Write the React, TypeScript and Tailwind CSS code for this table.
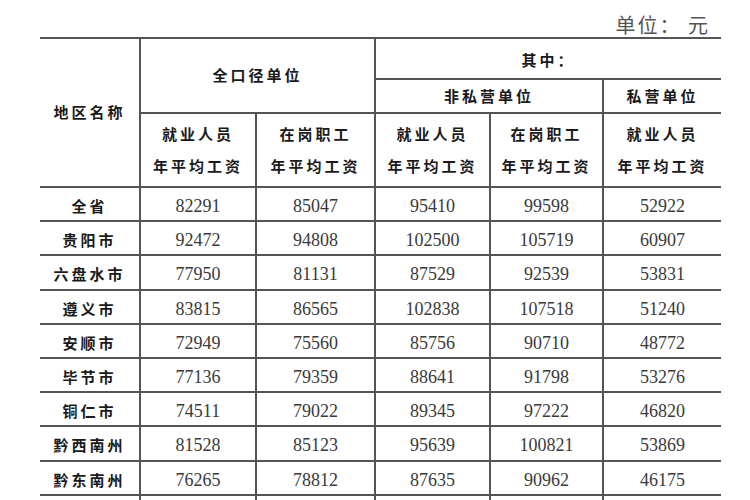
import React from "react";

const rows: [string, number, number, number, number, number][] = [
  ["全省", 82291, 85047, 95410, 99598, 52922],
  ["贵阳市", 92472, 94808, 102500, 105719, 60907],
  ["六盘水市", 77950, 81131, 87529, 92539, 53831],
  ["遵义市", 83815, 86565, 102838, 107518, 51240],
  ["安顺市", 72949, 75560, 85756, 90710, 48772],
  ["毕节市", 77136, 79359, 88641, 91798, 53276],
  ["铜仁市", 74511, 79022, 89345, 97222, 46820],
  ["黔西南州", 81528, 85123, 95639, 100821, 53869],
  ["黔东南州", 76265, 78812, 87635, 90962, 46175],
];

const cjk = "font-['Noto_Sans_CJK_SC',sans-serif]";
const cell = "border-2 border-[#555] p-0 text-center align-middle";
const head = `${cell} ${cjk} text-[15px] font-bold tracking-[3px] text-[#1a1a1a]`;

function TwoLine({ a }: { a: string }) {
  return (
    <div className="flex flex-col items-center leading-[32px]">
      <span>{a}</span>
      <span>年平均工资</span>
    </div>
  );
}

export default function App() {
  return (
    <div className="w-[750px] h-[500px] overflow-hidden bg-white">
      <div
        className={`h-[37px] flex items-end justify-end pr-[40px] leading-[24px] ${cjk} text-[20px] tracking-[2px] text-[#555]`}
      >
        单位： 元
      </div>
      <table className="ml-[40px] w-[681px] table-fixed border-collapse">
        <colgroup>
          <col className="w-[100px]" />
          <col className="w-[116px]" />
          <col className="w-[119px]" />
          <col className="w-[115px]" />
          <col className="w-[113px]" />
          <col className="w-[118px]" />
        </colgroup>
        <tbody>
          <tr className="h-[41px]">
            <td rowSpan={3} className={`${head} border-l-0`}>
              地区名称
            </td>
            <td rowSpan={2} colSpan={2} className={head}>
              全口径单位
            </td>
            <td colSpan={3} className={`${head} border-r-0 pt-[4px]`}>
              其中：
            </td>
          </tr>
          <tr className="h-[34px]">
            <td colSpan={2} className={head}>
              非私营单位
            </td>
            <td className={`${head} border-r-0`}>私营单位</td>
          </tr>
          <tr className="h-[74px]">
            <td className={head}>
              <TwoLine a="就业人员" />
            </td>
            <td className={head}>
              <TwoLine a="在岗职工" />
            </td>
            <td className={head}>
              <TwoLine a="就业人员" />
            </td>
            <td className={head}>
              <TwoLine a="在岗职工" />
            </td>
            <td className={`${head} border-r-0`}>
              <TwoLine a="就业人员" />
            </td>
          </tr>
          {rows.map(([name, ...vals]) => (
            <tr key={name} className="h-[34.2px]">
              <td className={`${head} border-l-0 tracking-[2px] pt-[4px] leading-[20px]`}>{name}</td>
              {vals.map((v, i) => (
                <td
                  key={i}
                  className={`${cell} ${i === 4 ? "border-r-0" : ""} pt-[4px] leading-[20px] font-['Liberation_Serif',serif] text-[18px] text-[#3a3a3a]`}
                >
                  {v}
                </td>
              ))}
            </tr>
          ))}
          <tr className="h-[34px]">
            <td className={`${cell} border-l-0`}></td>
            <td className={cell}></td>
            <td className={cell}></td>
            <td className={cell}></td>
            <td className={cell}></td>
            <td className={`${cell} border-r-0`}></td>
          </tr>
        </tbody>
      </table>
    </div>
  );
}
